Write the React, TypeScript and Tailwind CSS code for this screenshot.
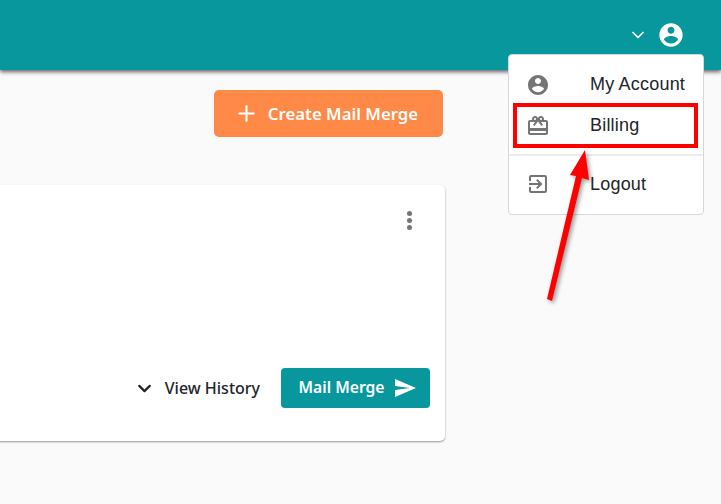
import { Plus, ChevronDown } from 'lucide-react'

const accountPath =
  'M12 2C6.48 2 2 6.48 2 12s4.48 10 10 10 10-4.48 10-10S17.52 2 12 2zm0 3c1.66 0 3 1.34 3 3s-1.34 3-3 3-3-1.34-3-3 1.34-3 3-3zm0 14.2c-2.5 0-4.71-1.28-6-3.22.03-1.99 4-3.08 6-3.08 1.99 0 5.97 1.09 6 3.08-1.29 1.94-3.5 3.22-6 3.22z'
const giftPath =
  'M20 6h-2.18c.11-.31.18-.65.18-1 0-1.66-1.34-3-3-3-1.05 0-1.96.54-2.5 1.35l-.5.67-.5-.68C10.96 2.54 10.05 2 9 2 7.34 2 6 3.34 6 5c0 .35.07.69.18 1H4c-1.11 0-1.99.89-1.99 2L2 19c0 1.11.89 2 2 2h16c1.11 0 2-.89 2-2V8c0-1.11-.89-2-2-2zm-5-2c.55 0 1 .45 1 1s-.45 1-1 1-1-.45-1-1 .45-1 1-1zM9 4c.55 0 1 .45 1 1s-.45 1-1 1-1-.45-1-1 .45-1 1-1zm11 15H4v-2h16v2zm0-5H4V8h5.08L7 10.83 8.62 12 11 8.76l1-1.36 1 1.36L15.38 12 17 10.83 14.92 8H20v6z'
const logoutPath =
  'M10.09 15.59L11.5 17l5-5-5-5-1.41 1.41L12.67 11H3v2h9.67l-2.58 2.59zM19 3H5c-1.11 0-2 .9-2 2v4h2V5h14v14H5v-4H3v4c0 1.1.89 2 2 2h14c1.1 0 2-.9 2-2V5c0-1.1-.9-2-2-2z'
const sendPath = 'M2.01 21L23 12 2.01 3 2 10l15 2-15 2z'

function Icon({ d, className }: { d: string; className: string }) {
  return (
    <svg viewBox="0 0 24 24" fill="currentColor" className={className}>
      <path d={d} />
    </svg>
  )
}

function MenuItem({ d, label, className }: { d: string; label: string; className: string }) {
  return (
    <div className={`flex items-center pl-[17px] ${className}`}>
      <Icon d={d} className="w-6 h-6 text-[#757575]" />
      <span className="ml-[40px] text-[18px] tracking-[0.2px] text-[#212529]">{label}</span>
    </div>
  )
}

export default function App() {
  return (
    <div className="relative w-[721px] h-[504px] overflow-hidden bg-[#fafafa] font-['Noto_Sans',sans-serif]">
      <header className="h-[70px] bg-[#08979d] shadow-[0_2px_4px_rgba(0,0,0,0.6)] flex items-center justify-end pr-[36px] pb-[1px] text-white">
        <ChevronDown className="w-[20px] h-[20px] mr-[9px]" strokeWidth={2} />
        <Icon d={accountPath} className="w-[28px] h-[28px]" />
      </header>

      <main className="flex flex-col items-end pr-[276px]">
        <button className="mt-[20px] mr-[2px] w-[229px] h-[47px] rounded-[5px] bg-[#ff8a47] text-white flex items-center justify-center pr-[5px] text-[16.8px] font-semibold">
          <Plus className="w-[25px] h-[25px] mr-[9px]" strokeWidth={2} />
          Create Mail Merge
        </button>

        <section className="mt-[48px] w-[600px] h-[256px] shrink-0 bg-white rounded-[5px] shadow-[0_1px_2px_rgba(0,0,0,0.4)] flex flex-col justify-between pr-[15px] pt-[26px] pb-[33px]">
          <div className="flex justify-end pr-[18px]">
            <div className="flex flex-col gap-[2px]">
              <span className="w-[5px] h-[5px] rounded-full bg-[#757575]" />
              <span className="w-[5px] h-[5px] rounded-full bg-[#757575]" />
              <span className="w-[5px] h-[5px] rounded-full bg-[#757575]" />
            </div>
          </div>
          <div className="flex items-center justify-end">
            <ChevronDown className="w-[21px] h-[21px] text-[#212529]" strokeWidth={2.5} />
            <span className="ml-[10px] text-[16px] font-medium text-[#212529]">View History</span>
            <button className="ml-[21px] w-[149px] h-[40px] rounded-[4px] bg-[#08979d] text-white flex items-center justify-center pl-[4px] text-[15.7px] font-semibold">
              Mail Merge
              <Icon d={sendPath} className="w-[24px] h-[24px] ml-[8px]" />
            </button>
          </div>
        </section>
      </main>

      {/* dropdown */}
      <div className="absolute left-[508px] top-[54px] w-[196px] h-[161px] bg-white border border-[#d8d8d8] rounded-[4px] font-['Liberation_Sans',sans-serif] pt-[9px]">
        <MenuItem d={accountPath} label="My Account" className="h-[41px]" />
        <MenuItem d={giftPath} label="Billing" className="h-[41px]" />
        <div className="mt-[8px] h-[2px] bg-[#ececec]" />
        <MenuItem d={logoutPath} label="Logout" className="mt-[8px] h-[40px]" />
      </div>

      {/* annotation */}
      <div className="absolute left-[513px] top-[103px] w-[185px] h-[45px] border-4 border-[#ff0000]" />
      <svg className="absolute left-0 top-0 drop-shadow-[2px_2px_2px_rgba(0,0,0,0.4)]" width="721" height="504">
        <polygon points="585,150 589,180 582,178 552,301 547,299 576,176 570,175" fill="#ff0000" />
      </svg>
    </div>
  )
}
